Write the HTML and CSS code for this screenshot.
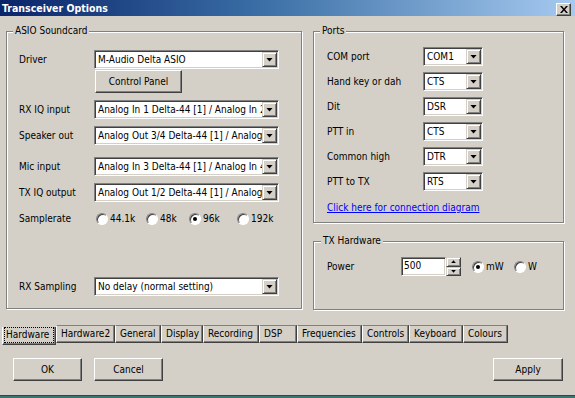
FILE: index.html
```html
<!DOCTYPE html>
<html lang="en">
<head>
  <meta charset="UTF-8">
  <title>Transceiver Options</title>
  <link rel="stylesheet" href="styles.css">
</head>
<body>
  <div class="window">
    <div class="titlebar">
      <span class="title">Transceiver Options</span>
      <span class="close">
        <svg width="8" height="7" viewBox="0 0 8 7">
          <path d="M0 0h2l2 2.5 2-2.5h2l-3 3.5 3 3.5h-2l-2-2.5-2 2.5h-2l3-3.5z" fill="#000"/>
        </svg>
      </span>
    </div>

    <div class="sheet">
      <!-- Left: soundcard -->
      <div class="group asio">
        <span class="caption">ASIO Soundcard</span>

        <div class="row r-driver">
          <span class="label">Driver</span>
          <div class="combo wide"><span class="value">M-Audio Delta ASIO</span><span class="arrow"></span></div>
        </div>
        <div class="row r-panel">
          <span class="label"></span>
          <span class="btn panel">Control Panel</span>
        </div>
        <div class="row r-gap7">
          <span class="label">RX IQ input</span>
          <div class="combo wide"><span class="value">Analog In 1 Delta-44 [1] / Analog In 2 Delta-44 [1]</span><span class="arrow"></span></div>
        </div>
        <div class="row r-gap7">
          <span class="label">Speaker out</span>
          <div class="combo wide"><span class="value">Analog Out 3/4 Delta-44 [1] / Analog Out 3/4</span><span class="arrow"></span></div>
        </div>
        <div class="row r-gap12">
          <span class="label">Mic input</span>
          <div class="combo wide"><span class="value">Analog In 3 Delta-44 [1] / Analog In 4 Delta-44 [1]</span><span class="arrow"></span></div>
        </div>
        <div class="row r-gap7">
          <span class="label">TX IQ output</span>
          <div class="combo wide"><span class="value">Analog Out 1/2 Delta-44 [1] / Analog Out 1/2</span><span class="arrow"></span></div>
        </div>
        <div class="row r-gap7">
          <span class="label">Samplerate</span>
          <div class="rates">
            <span class="radio"><span class="dot"></span>44.1k</span>
            <span class="radio"><span class="dot"></span>48k</span>
            <span class="radio"><span class="dot checked"></span>96k</span>
            <span class="radio"><span class="dot"></span>192k</span>
          </div>
        </div>
        <div class="row r-sampling">
          <span class="label">RX Sampling</span>
          <div class="combo wide"><span class="value">No delay (normal setting)</span><span class="arrow"></span></div>
        </div>
      </div>

      <!-- Right: ports and tx hardware -->
      <div class="side">
        <div class="group ports">
          <span class="caption">Ports</span>
          <div class="row r-first">
            <span class="label">COM port</span>
            <div class="combo small"><span class="value">COM1</span><span class="arrow"></span></div>
          </div>
          <div class="row r-gap6">
            <span class="label">Hand key or dah</span>
            <div class="combo small"><span class="value">CTS</span><span class="arrow"></span></div>
          </div>
          <div class="row r-gap6">
            <span class="label">Dit</span>
            <div class="combo small"><span class="value">DSR</span><span class="arrow"></span></div>
          </div>
          <div class="row r-gap6">
            <span class="label">PTT in</span>
            <div class="combo small"><span class="value">CTS</span><span class="arrow"></span></div>
          </div>
          <div class="row r-gap6">
            <span class="label">Common high</span>
            <div class="combo small"><span class="value">DTR</span><span class="arrow"></span></div>
          </div>
          <div class="row r-gap6">
            <span class="label">PTT to TX</span>
            <div class="combo small"><span class="value">RTS</span><span class="arrow"></span></div>
          </div>
          <a class="link" href="#">Click here for connection diagram</a>
        </div>

        <div class="group txhw">
          <span class="caption">TX Hardware</span>
          <div class="row r-first">
            <span class="label">Power</span>
            <div class="edit">500</div>
            <div class="spin">
              <span class="spin-btn up"></span>
              <span class="spin-btn down"></span>
            </div>
            <div class="units">
              <span class="radio"><span class="dot checked"></span>mW</span>
              <span class="radio"><span class="dot"></span>W</span>
            </div>
          </div>
        </div>
      </div>
    </div>

    <div class="tabs">
      <span class="tab active"><span class="focus">Hardware</span></span>
      <span class="tab t-hw2">Hardware2</span>
      <span class="tab t-general">General</span>
      <span class="tab t-display">Display</span>
      <span class="tab t-recording">Recording</span>
      <span class="tab t-dsp">DSP</span>
      <span class="tab t-freq">Frequencies</span>
      <span class="tab t-controls">Controls</span>
      <span class="tab t-keyboard">Keyboard</span>
      <span class="tab t-colours">Colours</span>
    </div>

    <div class="actions">
      <span class="btn action">OK</span>
      <span class="btn action">Cancel</span>
      <span class="btn action apply">Apply</span>
    </div>
  </div>
</body>
</html>
```

FILE: styles.css
```css
/* Classic Windows dialog */
* {
  box-sizing: border-box;
  margin: 0;
  padding: 0;
}

body {
  background: #3d7373;
  width: 575px;
  height: 398px;
  overflow: hidden;
  font-family: "DejaVu Sans Condensed", "Liberation Sans", sans-serif;
  font-size: 10px;
  color: #000;
}

.window {
  width: 575px;
  height: 396px;
  background: #d4d0c8;
  border-bottom: 1px solid #404040;
}

/* Title bar */
.titlebar {
  height: 16px;
  display: flex;
  align-items: center;
  padding: 0 4px 0 2px;
  background: linear-gradient(to right, #0a246a, #3a6ea5 45%, #a6caf0);
}

.title {
  flex: 1;
  color: #fff;
  font-weight: bold;
  font-size: 10.5px;
  line-height: 16px;
}

.close {
  width: 15px;
  height: 13px;
  margin-top: 2px;
  display: flex;
  align-items: center;
  justify-content: center;
  background: #d4d0c8;
  border: 1px solid;
  border-color: #fff #404040 #404040 #fff;
  box-shadow: inset -1px -1px 0 #808080;
}

/* Group boxes */
.sheet {
  display: flex;
  gap: 11px;
  margin-top: 15px;
  padding-left: 6px;
}

.side {
  width: 251px;
  display: flex;
  flex-direction: column;
}

.group {
  border: 1px solid #808080;
  box-shadow: inset 1px 1px 0 #fff, 1px 1px 0 #fff;
}

.caption {
  display: block;
  width: fit-content;
  padding: 0 2px;
  line-height: 12px;
  background: #d4d0c8;
  margin-top: -7px;
}

.asio {
  width: 296px;
  height: 278px;
  padding-left: 12px;
}

.asio .caption { margin-left: -6px; }

.ports {
  height: 192px;
  padding-left: 13px;
}

.ports .caption { margin-left: -7px; }

.txhw {
  height: 69px;
  margin-top: 18px;
  padding-left: 13px;
}

.txhw .caption { margin-left: -6px; }

/* Rows */
.row {
  display: flex;
  align-items: center;
  height: 19px;
}

.asio .label { width: 75px; }
.ports .label { width: 96px; }
.txhw .label { width: 74px; }

.r-driver { margin-top: 13px; }
.r-panel { margin-top: 1px; height: 23px; }
.r-gap6 { margin-top: 6px; }
.r-gap7 { margin-top: 7px; }
.r-gap12 { margin-top: 12px; }
.r-sampling { margin-top: 49px; }
.r-first { margin-top: 10px; }

/* Combo boxes */
.combo {
  display: flex;
  height: 19px;
  padding: 1px;
  background: #fff;
  border: 1px solid;
  border-color: #808080 #fff #fff #808080;
  box-shadow: inset 1px 1px 0 #404040, inset -1px -1px 0 #d4d0c8;
}

.combo.wide { width: 185px; }
.combo.small { width: 60px; }

.value {
  flex: 1;
  overflow: hidden;
  white-space: nowrap;
  padding-left: 2px;
  line-height: 15px;
}

.arrow,
.spin-btn {
  display: flex;
  align-items: center;
  justify-content: center;
  background: #d4d0c8;
  border: 1px solid;
  border-color: #d4d0c8 #404040 #404040 #d4d0c8;
  box-shadow: inset 1px 1px 0 #fff, inset -1px -1px 0 #808080;
}

.arrow {
  width: 15px;
  height: 15px;
}

.arrow::after {
  content: "";
  width: 7px;
  height: 4px;
  background: #000;
  clip-path: polygon(0 0, 100% 0, 50% 100%);
}

/* Buttons */
.btn {
  display: flex;
  align-items: center;
  justify-content: center;
  height: 23px;
  background: #d4d0c8;
  border: 1px solid;
  border-color: #fff #404040 #404040 #fff;
  box-shadow: inset -1px -1px 0 #808080;
}

.panel {
  width: 87px;
  margin-left: 1px;
}

/* Radio buttons */
.radio {
  display: flex;
  align-items: center;
  gap: 2px;
}

.dot {
  width: 12px;
  height: 12px;
  border-radius: 50%;
  display: flex;
  align-items: center;
  justify-content: center;
  background: #fff;
  border: 1px solid;
  border-color: #808080 #fff #fff #808080;
  box-shadow: inset 1px 1px 0 #404040;
}

.dot.checked::after {
  content: "";
  width: 4px;
  height: 4px;
  border-radius: 50%;
  background: #000;
}

.rates {
  display: grid;
  grid-template-columns: 50px 43px 48px auto;
  margin-left: 2px;
}

.units {
  display: grid;
  grid-template-columns: 42px auto;
  margin-left: 11px;
}

/* Power edit + spinner */
.edit {
  width: 45px;
  height: 19px;
  padding-left: 2px;
  line-height: 15px;
  background: #fff;
  border: 1px solid;
  border-color: #808080 #fff #fff #808080;
  box-shadow: inset 1px 1px 0 #404040, inset -1px -1px 0 #d4d0c8;
}

.spin {
  display: flex;
  flex-direction: column;
  width: 15px;
  height: 19px;
}

.spin-btn {
  height: 9.5px;
}

.spin-btn::after {
  content: "";
  width: 5px;
  height: 3px;
  background: #000;
}

.spin-btn.up::after { clip-path: polygon(50% 0, 100% 100%, 0 100%); }
.spin-btn.down::after { clip-path: polygon(0 0, 100% 0, 50% 100%); }

.link {
  display: block;
  width: fit-content;
  margin-top: 11px;
  line-height: 12px;
  color: #0000ff;
  text-decoration: underline;
}

/* Tabs */
.tabs {
  display: flex;
  align-items: flex-start;
  height: 20px;
  margin-top: 15px;
  padding-left: 2px;
}

.tab {
  height: 18px;
  padding-left: 4px;
  line-height: 16px;
  border: 1px solid;
  border-color: #808080 #404040 #404040 #fff;
  box-shadow: inset -1px -1px 0 #808080;
}

.tab.active {
  width: 54px;
  margin-top: 2px;
  padding-left: 2px;
  border-top: none;
}

.focus {
  display: block;
  width: 48px;
  height: 14px;
  line-height: 13px;
  margin-top: 1px;
  padding-left: 1px;
  outline: 1px dotted #000;
}

.t-hw2 { width: 59px; }
.t-general { width: 46px; }
.t-display { width: 42px; }
.t-recording { width: 56px; }
.t-dsp { width: 38px; }
.t-freq { width: 65px; }
.t-controls { width: 47px; }
.t-keyboard { width: 54px; }
.t-colours { width: 45px; }

/* Dialog buttons */
.actions {
  display: flex;
  gap: 12px;
  margin-top: 13px;
  padding: 0 12px 0 13px;
}

.action { width: 69px; }

.apply {
  width: 70px;
  margin-left: auto;
}
```
